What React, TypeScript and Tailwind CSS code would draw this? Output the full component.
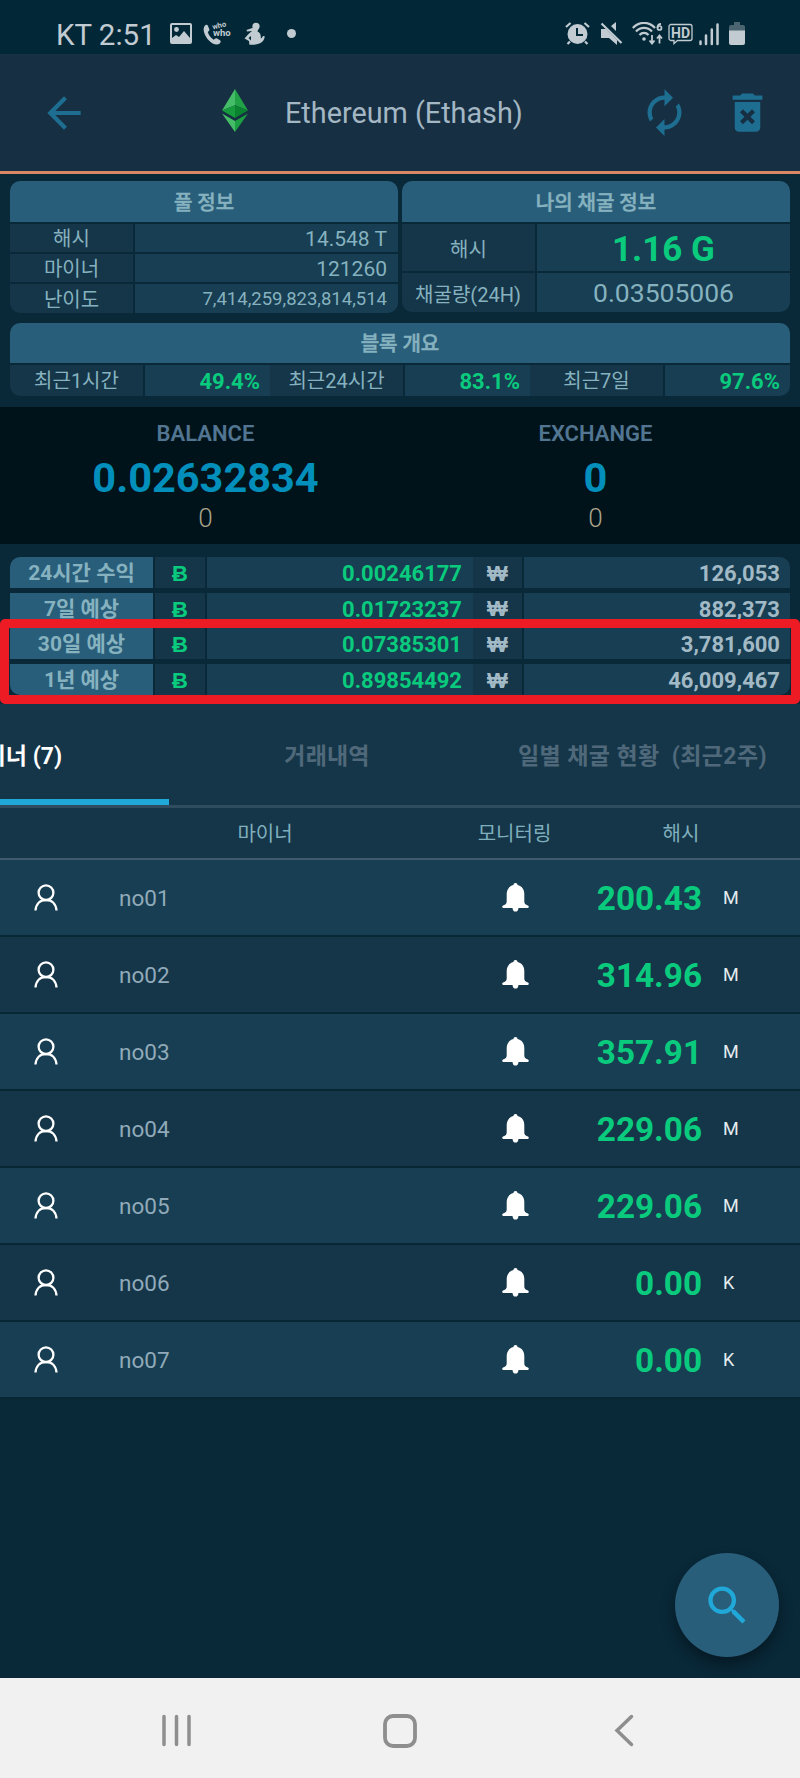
import type { ReactNode } from 'react';
import { MdArrowBack, MdAutorenew, MdDeleteForever, MdSearch } from 'react-icons/md';

interface Estimate {
  label: string;
  coin: string;
  won: string;
}

interface Miner {
  name: string;
  hash: string;
  unit: string;
}

const ESTIMATES: Estimate[] = [
  { label: '24시간 수익', coin: '0.00246177', won: '126,053' },
  { label: '7일 예상', coin: '0.01723237', won: '882,373' },
  { label: '30일 예상', coin: '0.07385301', won: '3,781,600' },
  { label: '1년 예상', coin: '0.89854492', won: '46,009,467' },
];

const MINERS: Miner[] = [
  { name: 'no01', hash: '200.43', unit: 'M' },
  { name: 'no02', hash: '314.96', unit: 'M' },
  { name: 'no03', hash: '357.91', unit: 'M' },
  { name: 'no04', hash: '229.06', unit: 'M' },
  { name: 'no05', hash: '229.06', unit: 'M' },
  { name: 'no06', hash: '0.00', unit: 'K' },
  { name: 'no07', hash: '0.00', unit: 'K' },
];

const BLOCKS = [
  { label: '최근1시간', value: '49.4%' },
  { label: '최근24시간', value: '83.1%' },
  { label: '최근7일', value: '97.6%' },
];

function StatusBar() {
  return (
    <div className="flex h-[54px] items-start bg-[#022838] pt-[22px] pr-[55px] pl-[56px] text-[#c1cbd1]">
      <span className="w-[113px] pt-[1px] text-[29.5px] leading-[25px] whitespace-nowrap">KT 2:51</span>
      <svg width="24" height="24" viewBox="0 0 24 24" fill="currentColor">
        <path
          fillRule="evenodd"
          d="M3 1h18a2 2 0 0 1 2 2v17a2 2 0 0 1-2 2H3a2 2 0 0 1-2-2V3a2 2 0 0 1 2-2zm0 2v13l4-3 3 2 5-6 6 7V3z"
        />
        <circle cx="7.5" cy="7.5" r="2.4" />
      </svg>
      <svg className="ml-[10px] overflow-visible" width="29" height="24" viewBox="0 0 29 24" fill="currentColor">
        <path d="M2 3.5C3 2.5 4.5 2.6 5 4l1.4 3.6c.3 1-.9 1.8-1.6 2.4 1 3.5 3 6 6 7.8 1-.8 1.8-2 2.9-1.5l3.3 1.9c1.2.8.7 2.3-.3 3.3-2.5 2.4-7.5.6-11-3.2C2 14.3-1.3 7 2 3.5z" />
        <text x="10" y="7.5" fontSize="7.5" fontWeight="700" transform="rotate(-14 10 7.5)">who</text>
        <text x="10" y="13.5" fontSize="9.5" fontWeight="700">who</text>
      </svg>
      <svg className="ml-[12px]" width="21" height="24" viewBox="0 0 21 24" fill="currentColor">
        <circle cx="12" cy="4.3" r="3.6" />
        <path
          fillRule="evenodd"
          d="M2.5 8l6.500-2.200 5.500.7-1 3c3 1.300 3.600 4 3.300 7 1.500-.5 1.600-3.200 3.400-2.500 1.300.5-.3 6-4.800 7.600-3 1.400-6.500 1.300-10 1.200L5 19 .5 16.500 4.500 12 8 9l-5 .5zM7 14l-2.500 2L7 18.500z"
        />
      </svg>
      <span className="mt-[7px] ml-[22px] h-[9px] w-[9px] rounded-full bg-[#c1cbd1]" />
      <div className="ml-auto flex items-start">
        <svg width="25" height="24" viewBox="0 0 25 24" fill="currentColor">
          <circle cx="12.5" cy="12" r="10" />
          <path d="M12 6v7h6" fill="none" stroke="#022838" strokeWidth="2" />
          <path d="M1 5l4.500-4M24 5l-4.500-4M5 19.500L2.500 22M20 19.500l2.500 2.500" stroke="currentColor" strokeWidth="2.2" />
        </svg>
        <svg className="ml-[10px]" width="23" height="24" viewBox="0 0 23 24" fill="currentColor">
          <path d="M1 7h5l11 11v5l-8-7H1zM16 0v9l-5-5z" />
          <path d="M1.500 1.500L21.500 21" stroke="currentColor" strokeWidth="2.2" />
        </svg>
        <svg className="ml-[9px]" width="32" height="24" viewBox="0 0 32 24" fill="none" stroke="currentColor" strokeWidth="2.3">
          <path d="M.8 6C7-.8 17-.8 23 6M4 9.500c4.500-4.800 11.500-4.800 16 0M7.500 13c2.600-2.800 6.400-2.800 9 0" />
          <circle cx="12" cy="17" r="1.8" fill="currentColor" stroke="none" />
          <path d="M20 13v8M17.500 18.500L20 21.500l2.500-3M27.500 21.500v-8M25 16.500l2.500-3 2.500 3M29 2c-3 0-3.500 2-3.500 4" strokeWidth="1.8" />
          <circle cx="27.5" cy="6" r="2" strokeWidth="1.7" />
        </svg>
        <svg className="ml-[4px]" width="25" height="24" viewBox="0 0 25 24" fill="currentColor">
          <path d="M3 2.500h19a2 2 0 0 1 2 2v12a2 2 0 0 1-2 2H9.500L6 21.500v-3H3a2 2 0 0 1-2-2v-12a2 2 0 0 1 2-2z" fill="none" stroke="currentColor" strokeWidth="1.3" />
          <text x="12.5" y="15.5" fontSize="14" fontWeight="700" textAnchor="middle">HD</text>
        </svg>
        <svg className="ml-[6px]" width="20" height="24" viewBox="0 0 20 24" stroke="currentColor" strokeWidth="2.5" strokeLinecap="round">
          <path d="M1.500 19.500V22M7 13.500V22M12.800 7.500V22M18.500 2.500V22" />
        </svg>
        <svg className="ml-[10px]" width="16" height="24" viewBox="0 0 16 24">
          <path d="M5 0h6v3h3a2 2 0 0 1 2 2v4H0V5a2 2 0 0 1 2-2h3z" fill="#4a656f" />
          <path d="M0 8.500h16V21a2 2 0 0 1-2 2H2a2 2 0 0 1-2-2z" fill="currentColor" />
        </svg>
      </div>
    </div>
  );
}

function EthereumLogo() {
  return (
    <svg width="26" height="43" viewBox="0 0 26 43">
      <path d="M13 0L0 21.500l13-5.300z" fill="#45bd68" />
      <path d="M13 0l13 21.500-13-5.300z" fill="#21a247" />
      <path d="M0 21.500l13-5.300v12.900z" fill="#169b3c" />
      <path d="M26 21.500l-13-5.300v12.900z" fill="#0a8230" />
      <path d="M0 24.500l13 7.600V43z" fill="#45bd68" />
      <path d="M26 24.500l-13 7.600V43z" fill="#1c9f43" />
    </svg>
  );
}

function AppHeader() {
  return (
    <header className="flex h-[120px] items-center border-b-[3px] border-[#d98765] bg-[#172f42] pr-[27px] pl-[39px] text-[#1d6e91]">
      <MdArrowBack size={50} />
      <span className="mt-[-4px] ml-[133px]">
        <EthereumLogo />
      </span>
      <h1 className="ml-[37px] pt-[1px] text-[28.8px] leading-none text-[#a3b7c4]">Ethereum (Ethash)</h1>
      <MdAutorenew className="ml-auto" size={51} />
      <MdDeleteForever className="ml-[32px]" size={51} />
    </header>
  );
}

function LabelCell({ className, children }: { className: string; children: ReactNode }) {
  return (
    <div className={`flex items-center justify-center bg-[#153649] text-[20px] leading-none text-[#86b2bf] ${className}`}>
      {children}
    </div>
  );
}

function ValueCell({ className, children }: { className: string; children: ReactNode }) {
  return <div className={`flex flex-1 items-center bg-[#173e52] leading-none ${className}`}>{children}</div>;
}

function PanelTitle({ className, children }: { className: string; children: ReactNode }) {
  return (
    <h2 className={`flex items-center justify-center bg-[#295e7b] pt-[2px] text-[20px] leading-none font-medium text-[#86b2bf] [-webkit-text-stroke:0.5px] ${className}`}>
      {children}
    </h2>
  );
}

function PoolInfo() {
  return (
    <section className="flex h-[132px] w-[388px] flex-col gap-[2px] overflow-hidden rounded-[10px] text-[#86b2bf]">
      <PanelTitle className="h-[41px]">풀 정보</PanelTitle>
      <div className="flex h-[28px] gap-[2px]">
        <LabelCell className="w-[123px] pt-[2px]">해시</LabelCell>
        <ValueCell className="justify-end pt-[2px] pr-[11px] text-[21px]">14.548 T</ValueCell>
      </div>
      <div className="flex h-[28px] gap-[2px]">
        <LabelCell className="w-[123px] pt-[2px]">마이너</LabelCell>
        <ValueCell className="justify-end pt-[2px] pr-[11px] text-[21px]">121260</ValueCell>
      </div>
      <div className="flex h-[29px] gap-[2px]">
        <LabelCell className="w-[123px] pt-[2px]">난이도</LabelCell>
        <ValueCell className="justify-end pt-[1px] pr-[11px] text-[18.5px]">7,414,259,823,814,514</ValueCell>
      </div>
    </section>
  );
}

function MyMining() {
  return (
    <section className="flex h-[131px] w-[388px] flex-col gap-[2px] overflow-hidden rounded-[10px] text-[#86b2bf]">
      <PanelTitle className="h-[41px]">나의 채굴 정보</PanelTitle>
      <div className="flex h-[47px] gap-[2px]">
        <LabelCell className="w-[133px] pt-[4px]">해시</LabelCell>
        <ValueCell className="justify-center pt-[3px] text-[35px] font-bold text-[#0acb7d]">1.16 G</ValueCell>
      </div>
      <div className="flex h-[39px] gap-[2px]">
        <LabelCell className="w-[133px] pt-[4px] pr-[1px]">채굴량(24H)</LabelCell>
        <ValueCell className="justify-center pt-[1px] text-[26.5px]">0.03505006</ValueCell>
      </div>
    </section>
  );
}

function BlockOverview() {
  return (
    <section className="mt-[10px] flex h-[73px] flex-col gap-[2px] overflow-hidden rounded-[10px]">
      <PanelTitle className="h-[40px]">블록 개요</PanelTitle>
      <div className="flex h-[31px]">
        {BLOCKS.map((block) => (
          <div key={block.label} className="flex flex-1 gap-[2px]">
            <LabelCell className="w-[133px]">{block.label}</LabelCell>
            <ValueCell className="justify-end pt-[3px] pr-[10px] text-[22px] font-bold text-[#0acb7d]">{block.value}</ValueCell>
          </div>
        ))}
      </div>
    </section>
  );
}

function BalanceColumn({ title, amount }: { title: string; amount: string }) {
  return (
    <div className="flex w-[390px] flex-col items-center pl-[1px]">
      <span className="text-[22px] leading-[26px] font-semibold text-[#527592]">{title}</span>
      <span className="mt-[8px] text-[41.5px] leading-[46px] font-bold text-[#028fbb]">{amount}</span>
      <span className="mt-[2px] text-[26px] leading-[30px] font-light text-[#aaa58c]">0</span>
    </div>
  );
}

function Estimates() {
  return (
    <section className="relative h-[160px] px-[10px] pt-[13px]">
      <div className="flex flex-col gap-[4.7px] overflow-hidden rounded-[10px] text-[22px] leading-none">
        {ESTIMATES.map((row) => (
          <div key={row.label} className="flex h-[31px] gap-[2px] font-bold">
            <div className="flex w-[143px] items-center justify-center bg-[#295e7b] pt-[2px] text-[21px] font-bold text-[#86b2bf]">{row.label}</div>
            <div className="flex w-[50px] items-center justify-center bg-[#153649] pt-[3px] text-[#0acb7d]">Ƀ</div>
            <div className="flex flex-1">
              <div className="flex w-[266px] items-center justify-end bg-[#173e52] pt-[3px] pr-[11px] text-[#0acb7d]">{row.coin}</div>
              <div className="flex w-[49px] items-center justify-center bg-[#153649] pt-[2px] font-['Liberation_Sans',sans-serif] text-[#a2b9c6]">₩</div>
              <div className="ml-[2px] flex flex-1 items-center justify-end bg-[#173e52] pt-[3px] pr-[10px] text-[#a2b9c6]">{row.won}</div>
            </div>
          </div>
        ))}
      </div>
      {/* highlight round the 30 day and 1 year rows */}
      <div className="absolute inset-x-0 top-[75px] h-[85px] rounded-[5px] border-[9px] border-[#ed1c24]" />
    </section>
  );
}

function Tabs() {
  return (
    <nav className="relative flex h-[104px] items-center overflow-hidden border-b-[3px] border-[#304d60] bg-[#153649] pt-[4px] text-[23px] leading-none font-bold whitespace-nowrap text-[#50697a]">
      <div className="flex w-[169px] justify-end pr-[107px] text-white">마이너 (7)</div>
      <div className="flex w-[316px] justify-center tracking-[0.2px]">거래내역</div>
      <div className="flex w-[315px] justify-center tracking-[0.4px] whitespace-pre">일별 채굴 현황  (최근2주)</div>
      <span className="absolute bottom-0 left-0 h-[6px] w-[169px] bg-[#20a9d8]" />
    </nav>
  );
}

function PersonIcon() {
  return (
    <svg width="24" height="27" viewBox="0 0 24 27" fill="none" stroke="white" strokeWidth="2.3">
      <circle cx="12" cy="8.7" r="7.4" />
      <path d="M1.500 26.500C2 20 6 16 12 16S22 20 22.500 26.500" />
    </svg>
  );
}

function BellIcon() {
  return (
    <svg className="ml-px" width="27" height="29" viewBox="0 0 27 29" fill="white">
      <path d="M13.500 0c1.300 0 2 .9 2 2.100 4.500 1 6.800 4.500 6.800 9v7.500c0 2 1 3.200 3.600 3.800 1.200.4 1.200 2.300 0 2.500H16.500c-.2 2.200-1.200 3.700-3 3.700s-2.800-1.500-3-3.700H1.100c-1.200-.2-1.200-2.100 0-2.500 2.600-.6 3.600-1.800 3.600-3.800v-7.500c0-4.500 2.300-8 6.800-9C11.500.9 12.200 0 13.500 0z" />
    </svg>
  );
}

function MinerRow({ miner }: { miner: Miner }) {
  return (
    <li className="flex h-[77px] items-center border-b-2 border-[#072734] leading-none odd:bg-[#173e52] even:bg-[#153649]">
      <span className="ml-[34px]">
        <PersonIcon />
      </span>
      <span className="ml-[61px] w-[382px] pt-[1px] text-[22.5px] text-[#91aab9]">{miner.name}</span>
      <BellIcon />
      <span className="w-[173px] pt-[2px] text-right text-[33.3px] font-bold text-[#0acb7d]">{miner.hash}</span>
      <span className="ml-[21px] pt-[1px] text-[18px] text-[#e5ecef]">{miner.unit}</span>
    </li>
  );
}

function SystemNav() {
  return (
    <div className="flex h-[100px] items-center bg-[#f1f1f1] pt-[5px] pl-[161px]">
      <svg width="31" height="33" viewBox="0 0 31 33" stroke="#8e8e8e" strokeWidth="3.5" strokeLinecap="round">
        <path d="M3 2.500v28M15.500 2.500v28M28 2.500v28" />
      </svg>
      <svg className="ml-[191px]" width="34" height="34" viewBox="0 0 34 34" fill="none" stroke="#8e8e8e" strokeWidth="3.8">
        <rect x="2" y="2" width="30" height="30" rx="8" />
      </svg>
      <svg className="ml-[197px]" width="20" height="33" viewBox="0 0 20 33" fill="none" stroke="#8e8e8e" strokeWidth="3.5" strokeLinecap="round">
        <path d="M17.500 2.500L3 16.500l14.500 14" />
      </svg>
    </div>
  );
}

export default function App() {
  return (
    <div className="relative flex h-[1778px] w-[800px] flex-col overflow-hidden bg-[#092838] font-['Roboto','Noto_Sans_CJK_KR',sans-serif]">
      <StatusBar />
      <AppHeader />
      <div className="h-[233px] px-[10px] pt-[7px]">
        <div className="flex justify-between">
          <PoolInfo />
          <MyMining />
        </div>
        <BlockOverview />
      </div>
      <section className="flex h-[137px] bg-[#01131a] px-[10px] pt-[14px]">
        <BalanceColumn title="BALANCE" amount="0.02632834" />
        <BalanceColumn title="EXCHANGE" amount="0" />
      </section>
      <Estimates />
      <Tabs />
      <div className="flex h-[52px] items-center border-b-2 border-[#405a6d] bg-[#153649] pt-[2px] text-[20px] leading-none text-[#7fafbd]">
        <span className="ml-[130px] w-[270px] text-center">마이너</span>
        <span className="w-[229px] text-center">모니터링</span>
        <span className="w-[104px] text-center">해시</span>
      </div>
      <ul>
        {MINERS.map((miner) => (
          <MinerRow key={miner.name} miner={miner} />
        ))}
      </ul>
      <div className="flex-1" />
      <SystemNav />
      <button
        type="button"
        aria-label="search"
        className="absolute top-[1553px] left-[675px] flex h-[104px] w-[104px] items-center justify-center rounded-full bg-[#295e7b] text-[#20a9d8] shadow-[0_8px_14px_rgba(0,0,0,0.35)]"
      >
        <MdSearch size={51} />
      </button>
    </div>
  );
}
